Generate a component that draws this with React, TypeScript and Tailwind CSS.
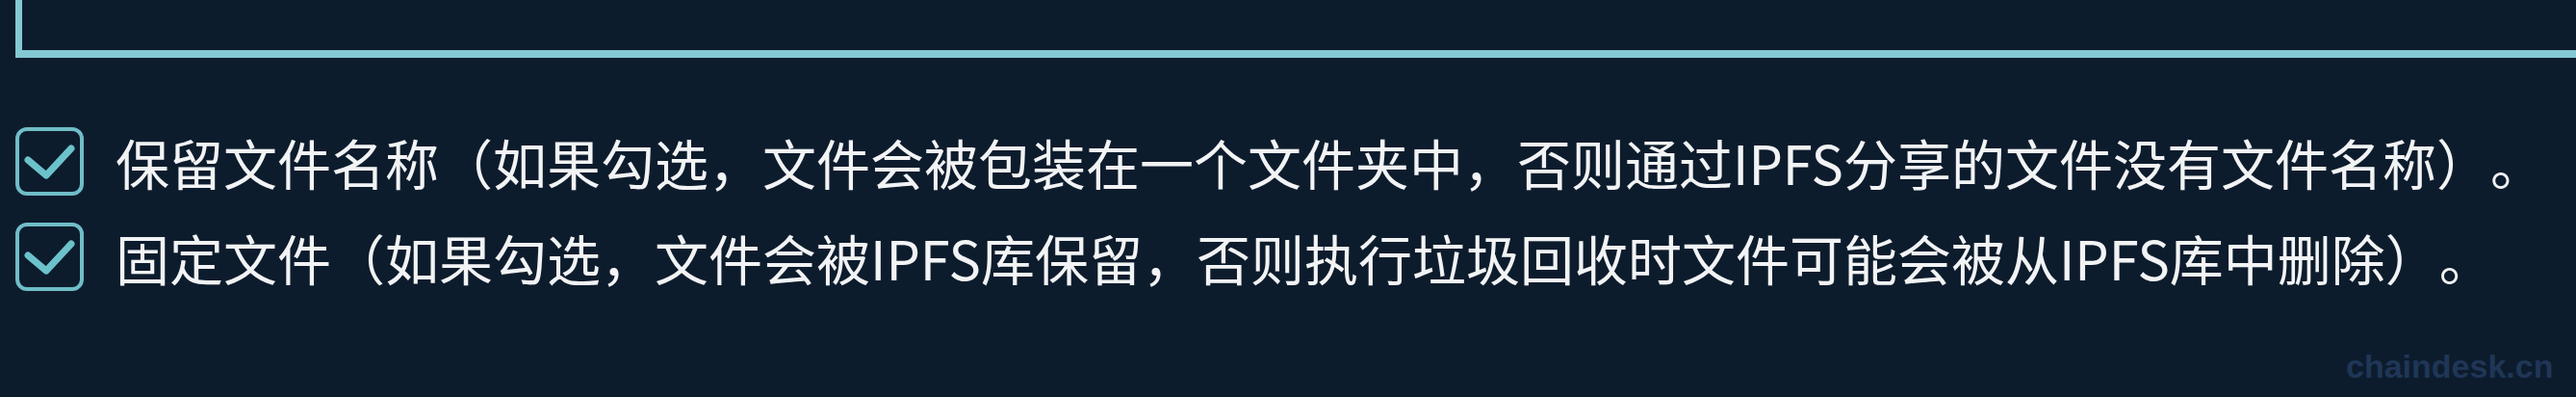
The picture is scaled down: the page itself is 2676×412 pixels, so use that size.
import React from "react";

function CheckBox() {
  return (
    <div className="w-[71px] h-[71px] shrink-0 rounded-[12px] border-[4px] border-[#6fbdc7] flex items-center justify-center">
      <svg width="63" height="63" viewBox="0 0 63 63" fill="none">
        <polyline
          points="9,30 28,46 54,18"
          stroke="#6cc2cb"
          strokeWidth="7"
          strokeLinecap="round"
          strokeLinejoin="round"
        />
      </svg>
    </div>
  );
}

function Row({ text }: { text: string }) {
  return (
    <div className="h-[99px] flex items-center gap-[33px] pl-[16px]">
      <CheckBox />
      <span
        className="text-[56px] leading-none text-[#f2f3f4] whitespace-nowrap [text-spacing-trim:space-all]"
        style={{ fontFamily: '"Noto Sans CJK SC", "Noto Sans", sans-serif' }}
      >
        {text}
      </span>
    </div>
  );
}

export default function App() {
  return (
    <div className="relative w-[2676px] h-[412px] overflow-hidden bg-[#0d1c2d]">
      <div className="ml-[16px] w-[2720px] h-[60px] border-l-[7px] border-b-[8px] border-[#83c8d2]" />
      <div className="pt-[58px] flex flex-col">
        <Row text="保留文件名称（如果勾选，文件会被包装在一个文件夹中，否则通过IPFS分享的文件没有文件名称）。" />
        <Row text="固定文件（如果勾选，文件会被IPFS库保留，否则执行垃圾回收时文件可能会被从IPFS库中删除）。" />
      </div>
      <div
        className="absolute left-[2437px] top-[363px] text-[34px] leading-none font-bold text-[#1f3657]"
        style={{ fontFamily: '"Liberation Sans", Arial, sans-serif' }}
      >
        chaindesk.cn
      </div>
    </div>
  );
}
